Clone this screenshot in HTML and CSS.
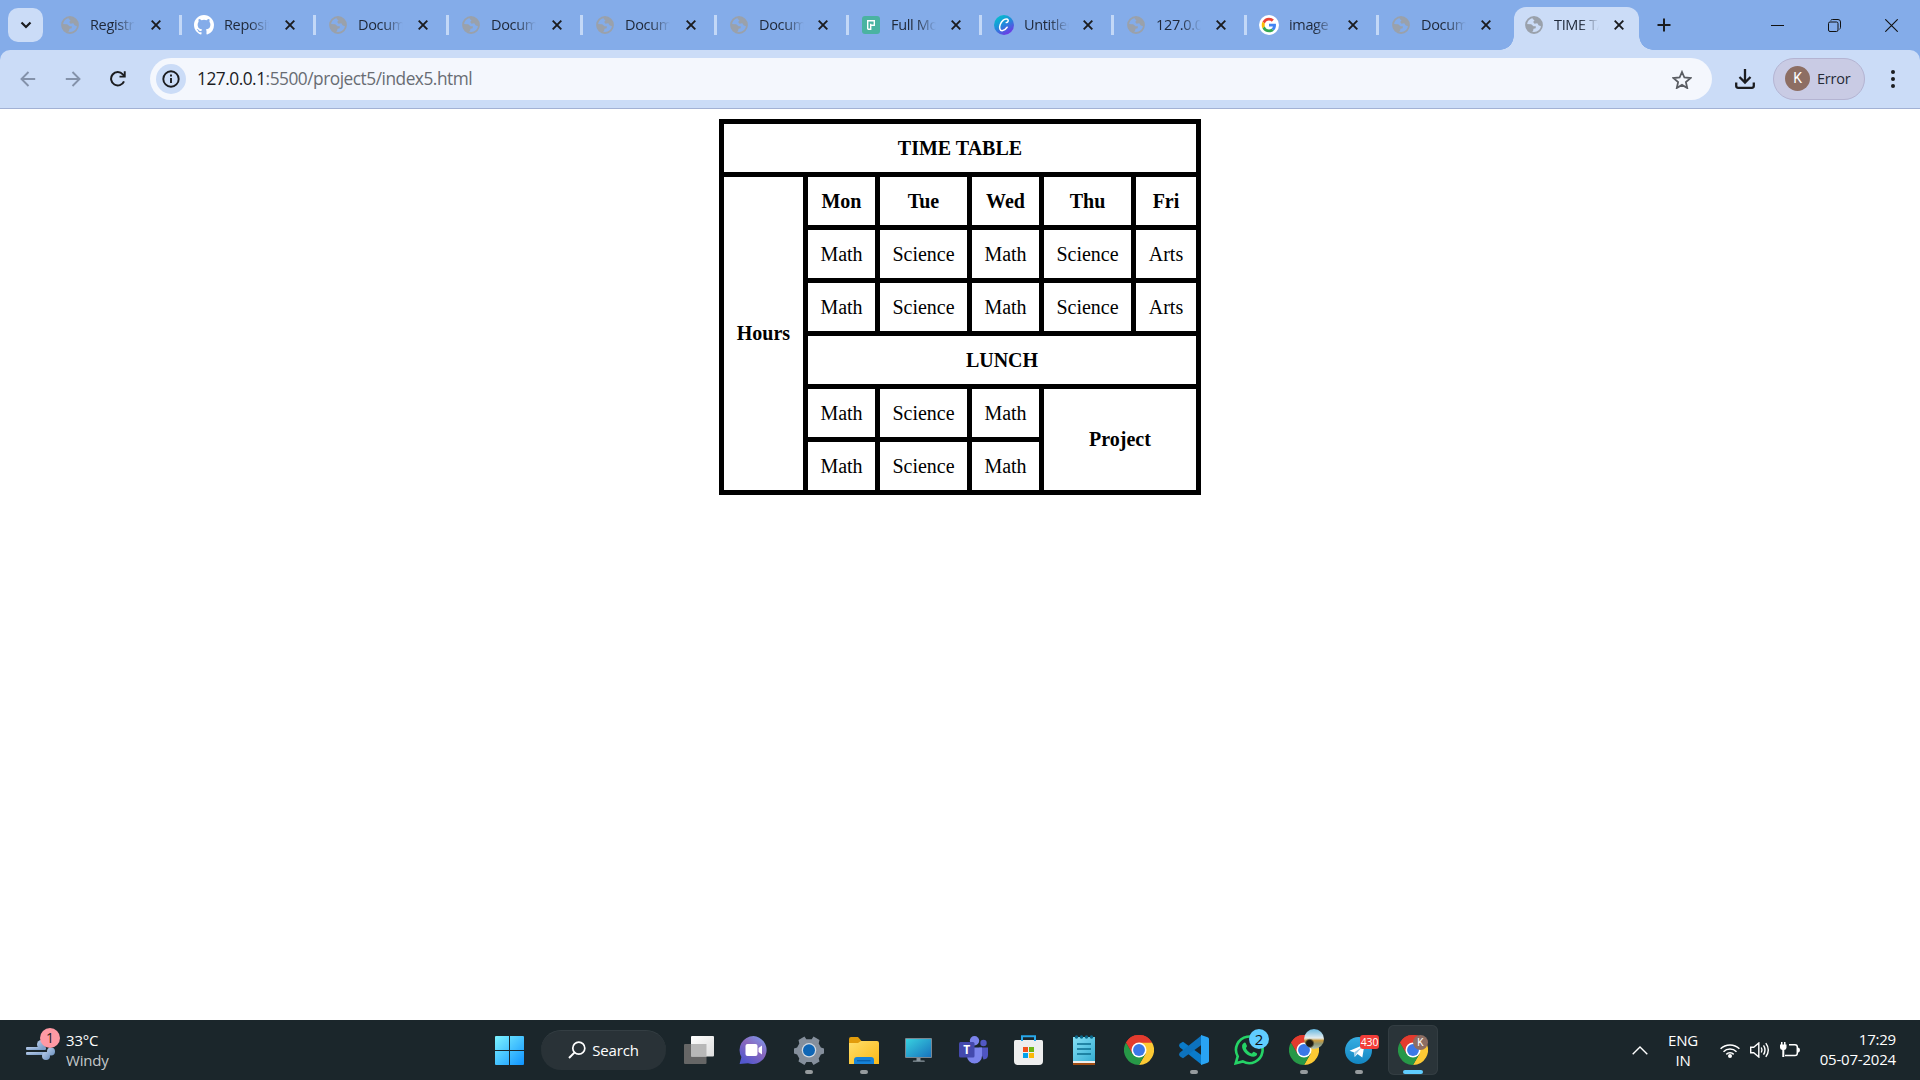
FILE: index.html
```html
<!DOCTYPE html>
<html lang="en">
<head>
<meta charset="utf-8">
<title>TIME TABLE</title>
<link rel="stylesheet" href="styles.css">
</head>
<body>
<svg class="defs" width="0" height="0" aria-hidden="true">
  <defs>
    <symbol id="globe" viewBox="0 0 18 18">
      <circle cx="9" cy="9" r="8" fill="none" stroke="currentColor" stroke-width="1.8"/>
      <path d="M8 1.2L7.600 3 9.500 4.200 8.200 6l1.300 1.800 2.800-.5 1.500 2.200 2.900.7A8 8 0 0 0 8 1.200z" fill="currentColor"/>
      <path d="M1.200 8l5 .3 2.300 1.900h2.300L10.700 12.300 8.500 12.800 8 15.200 6 16.300A8 8 0 0 1 1.200 8z" fill="currentColor"/>
    </symbol>
    <symbol id="close" viewBox="0 0 10 10"><path d="M.7.700l8.600 8.600M9.300.7L.7 9.300" stroke="currentColor" stroke-width="1.900" fill="none"/></symbol>
    <symbol id="chrome" viewBox="0 0 48 48">
      <path d="M24 24L3.200 12A24 24 0 0 1 44.800 12z" fill="#e33b2e"/>
      <path d="M24 12h20.800A24 24 0 0 1 24 48l10.400-18z" fill="#fcc934"/>
      <path d="M34.400 30L24 48A24 24 0 0 1 3.200 12l10.400 18z" fill="#279847"/>
      <path d="M3.200 12A24 24 0 0 1 44.800 12H24L13.600 30z" fill="#e33b2e"/>
      <circle cx="24" cy="24" r="12" fill="#fff"/><circle cx="24" cy="24" r="9.500" fill="#3b78e7"/>
    </symbol>
  </defs>
</svg>

<header class="browser">
  <div class="tabstrip">
    <button class="tab-search"><svg width="12" height="8" viewBox="0 0 12 8"><path d="M1.500 1.500L6 6l4.500-4.500" fill="none" stroke="#1b1c1f" stroke-width="2.200"/></svg></button>
    <div class="tab w134"><span class="fav"><svg class="globe"><use href="#globe"/></svg></span><span class="label">Registration</span><svg class="x"><use href="#close"/></svg></div>
    <div class="tab w134"><span class="fav"><svg width="20" height="20" viewBox="0 0 16 16"><path fill="#fff" d="M8 0C3.580 0 0 3.580 0 8c0 3.540 2.290 6.530 5.470 7.590.4.070.55-.17.55-.38 0-.19-.01-.82-.01-1.490-2.010.37-2.530-.49-2.690-.94-.09-.23-.48-.94-.82-1.130-.28-.15-.68-.52-.01-.53.63-.01 1.080.58 1.230.82.720 1.210 1.870.87 2.330.66.070-.52.28-.87.51-1.070-1.780-.2-3.640-.89-3.640-3.950 0-.87.31-1.590.82-2.150-.08-.2-.36-1.020.08-2.120 0 0 .67-.21 2.200.82a7.600 7.600 0 0 1 4 0c1.530-1.040 2.200-.82 2.200-.82.44 1.100.16 1.920.08 2.120.51.56.82 1.270.82 2.150 0 3.070-1.870 3.750-3.650 3.950.29.25.54.73.54 1.480 0 1.070-.01 1.930-.01 2.200 0 .21.15.46.55.38A8 8 0 0 0 16 8c0-4.420-3.580-8-8-8z"/></svg></span><span class="label">Repositories</span><svg class="x"><use href="#close"/></svg></div>
    <div class="tab w133"><span class="fav"><svg class="globe"><use href="#globe"/></svg></span><span class="label">Document</span><svg class="x"><use href="#close"/></svg></div>
    <div class="tab w134"><span class="fav"><svg class="globe"><use href="#globe"/></svg></span><span class="label">Document</span><svg class="x"><use href="#close"/></svg></div>
    <div class="tab w134"><span class="fav"><svg class="globe"><use href="#globe"/></svg></span><span class="label">Document</span><svg class="x"><use href="#close"/></svg></div>
    <div class="tab w132"><span class="fav"><svg class="globe"><use href="#globe"/></svg></span><span class="label">Document</span><svg class="x"><use href="#close"/></svg></div>
    <div class="tab w133"><span class="fav"><svg width="18" height="18" viewBox="0 0 18 18"><rect width="18" height="18" rx="3" fill="#4ab3a1"/><path d="M5.700 13.300V4.700h6.600v4.600H8.700M5.700 13.300h3V7.800" fill="none" stroke="#fff" stroke-width="1.400"/></svg></span><span class="label">Full Moon</span><svg class="x"><use href="#close"/></svg></div>
    <div class="tab w132"><span class="fav"><svg width="20" height="20" viewBox="0 0 20 20"><defs><linearGradient id="cv" x1=".2" y1="0" x2=".8" y2="1"><stop offset="0" stop-color="#00c4cc"/><stop offset=".45" stop-color="#1f8ddb"/><stop offset="1" stop-color="#7d2ae8"/></linearGradient></defs><circle cx="10" cy="10" r="10" fill="url(#cv)"/><path d="M12.300 7.600c1.500-.2 2.200-1.500 1.800-2.600C13.500 3.500 11 3.700 9 5.400 6.600 7.500 5 11.300 5.900 13.900c.9 2.600 4.300 2.500 7.200-1.700" fill="none" stroke="#fff" stroke-width="1.500" stroke-linecap="round"/></svg></span><span class="label">Untitled</span><svg class="x"><use href="#close"/></svg></div>
    <div class="tab w133"><span class="fav"><svg class="globe"><use href="#globe"/></svg></span><span class="label">127.0.0.1</span><svg class="x"><use href="#close"/></svg></div>
    <div class="tab w132"><span class="fav"><svg width="20" height="20" viewBox="0 0 20 20"><circle cx="10" cy="10" r="10" fill="#fff"/><g transform="translate(2.700 2.700) scale(.304)"><path fill="#EA4335" d="M24 9.500c3.540 0 6.710 1.220 9.210 3.600l6.850-6.850C35.900 2.380 30.470 0 24 0 14.620 0 6.510 5.380 2.560 13.220l7.980 6.190C12.430 13.720 17.740 9.500 24 9.500z"/><path fill="#4285F4" d="M46.980 24.550c0-1.570-.15-3.090-.38-4.550H24v9.020h12.940c-.58 2.960-2.260 5.480-4.780 7.180l7.730 6c4.510-4.180 7.090-10.360 7.090-17.650z"/><path fill="#FBBC05" d="M10.530 28.590c-.48-1.450-.76-2.990-.76-4.590s.27-3.140.76-4.590l-7.980-6.190C.92 16.460 0 20.120 0 24c0 3.880.92 7.540 2.560 10.780l7.970-6.190z"/><path fill="#34A853" d="M24 48c6.480 0 11.930-2.130 15.890-5.810l-7.730-6c-2.150 1.450-4.920 2.300-8.160 2.300-6.260 0-11.570-4.220-13.470-9.910l-7.980 6.190C6.510 42.620 14.620 48 24 48z"/></g></svg></span><span class="label">image</span><svg class="x"><use href="#close"/></svg></div>
    <div class="tab w133 last"><span class="fav"><svg class="globe"><use href="#globe"/></svg></span><span class="label">Document</span><svg class="x"><use href="#close"/></svg></div>
    <div class="tab active"><span class="fav"><svg class="globe"><use href="#globe"/></svg></span><span class="label">TIME TABLE</span><svg class="x"><use href="#close"/></svg></div>
    <svg class="plus" width="14" height="14" viewBox="0 0 14 14"><path d="M7 .5v13M.5 7h13" stroke="#1b1c1f" stroke-width="2"/></svg>
    <div class="window-controls">
      <svg width="13" height="13" viewBox="0 0 13 13"><path d="M0 6.500h13" stroke="#111" stroke-width="1"/></svg>
      <svg width="13" height="13" viewBox="0 0 13 13"><rect x=".5" y="3" width="9.500" height="9.500" rx="1.500" fill="none" stroke="#111"/><path d="M2.800 1.500Q3 .5 4.500.500h5.500a2.500 2.500 0 0 1 2.500 2.500v5.500q0 1.200-1 1.700" fill="none" stroke="#111"/></svg>
      <svg width="13" height="13" viewBox="0 0 13 13"><path d="M.3.300l12.400 12.400M12.700.3L.3 12.700" stroke="#111" stroke-width="1.100"/></svg>
    </div>
  </div>
  <div class="toolbar">
    <nav class="nav">
      <svg class="dim" width="16" height="16" viewBox="0 0 16 16"><path d="M15.200 8H2M8.500 1L1.500 8l7 7" fill="none" stroke="currentColor" stroke-width="1.900"/></svg>
      <svg class="dim" width="16" height="16" viewBox="0 0 16 16"><path d="M.8 8H14M7.500 1l7 7-7 7" fill="none" stroke="currentColor" stroke-width="1.900"/></svg>
      <svg width="16" height="16" viewBox="0 0 16 16"><path d="M14 10.300A6.700 6.700 0 1 1 12.800 3.300L14.300 5" fill="none" stroke="#1b1c1f" stroke-width="2"/><path d="M15.700.3v6.200H9.500V4.800h4.300V.3z" fill="#1b1c1f"/></svg>
    </nav>
    <div class="address">
      <span class="info"><svg width="18" height="18" viewBox="0 0 18 18"><circle cx="9" cy="9" r="7.700" fill="none" stroke="#1b1c1f" stroke-width="1.900"/><path d="M9 8v5M9 4.600v2" stroke="#1b1c1f" stroke-width="1.900"/></svg></span>
      <span class="url"><b>127.0.0.1</b>:5500/project5/index5.html</span>
      <svg class="star" width="20" height="19" viewBox="0 0 20 19"><path d="M10 2l2.400 5.500 6 .6-4.500 4 1.300 5.900L10 14.900 4.800 18l1.300-5.900-4.500-4 6-.6z" fill="none" stroke="#5a5d63" stroke-width="1.800"/></svg>
    </div>
    <svg class="download" width="20" height="20" viewBox="0 0 20 20"><path d="M10 0v13M4.500 8l5.500 5.500L15.500 8M1.200 13.500v3.300q0 2 2 2h13.600q2 0 2-2v-3.300" fill="none" stroke="#1b1c1f" stroke-width="2.300"/></svg>
    <div class="profile"><span class="avatar">K</span><span>Error</span></div>
    <svg class="menu" width="4" height="18" viewBox="0 0 4 18"><g fill="#1b1c1f"><circle cx="2" cy="2" r="2"/><circle cx="2" cy="9" r="2"/><circle cx="2" cy="16" r="2"/></g></svg>
  </div>
</header>

<main class="page">
  <table class="timetable">
    <colgroup><col class="c-hours"><col class="c-math"><col class="c-sci"><col class="c-math"><col class="c-sci"><col class="c-fri"></colgroup>
    <tr><th colspan="6">TIME TABLE</th></tr>
    <tr><th rowspan="6" class="tall">Hours</th><th>Mon</th><th>Tue</th><th>Wed</th><th>Thu</th><th>Fri</th></tr>
    <tr><td>Math</td><td>Science</td><td>Math</td><td>Science</td><td>Arts</td></tr>
    <tr><td>Math</td><td>Science</td><td>Math</td><td>Science</td><td>Arts</td></tr>
    <tr><th colspan="5">LUNCH</th></tr>
    <tr><td>Math</td><td>Science</td><td>Math</td><th colspan="2" rowspan="2" class="tall">Project</th></tr>
    <tr><td>Math</td><td>Science</td><td>Math</td></tr>
  </table>
</main>

<footer class="taskbar">
  <div class="weather">
    <div class="wind">
      <svg width="30" height="20" viewBox="0 0 30 20"><defs><linearGradient id="wd" x1="0" y1="0" x2="1" y2="1"><stop offset="0" stop-color="#b9cdea"/><stop offset="1" stop-color="#6d92c0"/></linearGradient></defs><g fill="url(#wd)"><rect x="0" y="7" width="20" height="3" rx="1"/><rect x="0" y="12" width="24" height="3" rx="1"/><circle cx="15.500" cy="4.500" r="4.500"/><circle cx="25" cy="11.500" r="4"/><circle cx="20" cy="16" r="4"/></g></svg>
      <span class="wind-badge">1</span>
    </div>
    <div class="weather-text"><span>33°C</span><span class="muted">Windy</span></div>
  </div>
  <div class="start"><svg width="29" height="29" viewBox="0 0 29 29"><defs><linearGradient id="wn" x1="0" y1="0" x2="1" y2="1"><stop offset="0" stop-color="#7df3ff"/><stop offset="1" stop-color="#0f93ff"/></linearGradient></defs><path fill="url(#wn)" d="M0 1q0-1 1-1h13v14H0zM15 0h13q1 0 1 1v13H15zM0 15h14v14H1q-1 0-1-1zM15 15h14v13q0 1-1 1H15z"/></svg></div>
  <div class="search"><svg width="18" height="18" viewBox="0 0 18 18"><circle cx="10.800" cy="7.200" r="6" fill="none" stroke="#fff" stroke-width="1.700"/><path d="M6.400 11.600L1 17" stroke="#fff" stroke-width="2"/></svg><span>Search</span></div>
  <div class="apps">
    <div class="app"><svg width="30" height="28" viewBox="0 0 30 28"><defs><linearGradient id="t1" x1="0" y1="0" x2="1" y2="1"><stop offset="0" stop-color="#fff"/><stop offset="1" stop-color="#ddd"/></linearGradient></defs><rect x="0" y="8" width="22.500" height="20" rx="1" fill="#666"/><rect x="7" y="0" width="23" height="20.500" rx="1" fill="url(#t1)"/><path d="M7 8h15.500v12.500H7z" fill="#b8b8b8"/></svg></div>
    <div class="app"><svg width="29" height="28" viewBox="0 0 29 28"><defs><linearGradient id="ch" x1="1" y1="0" x2=".3" y2="1"><stop offset="0" stop-color="#7aa0f4"/><stop offset=".5" stop-color="#8a68bd"/><stop offset="1" stop-color="#5257ce"/></linearGradient></defs><path d="M14.500 0A14 14 0 1 1 9 27.200L.6 28l1.800-7A14 14 0 0 1 14.500 0z" fill="url(#ch)"/><rect x="6.500" y="8" width="12" height="12" rx="2" fill="#fff"/><path d="M19.500 12l3.500-2.500v9L19.500 16z" fill="#fff"/></svg></div>
    <div class="app run"><svg width="30" height="29" viewBox="0 0 30 29"><path d="M10.500.5l1.800 2.700h5.400L19.500.5l6 3.500-.8 3.400 2.200 4 3.100 1v5l-3.100 1-2.200 4 .8 3.200-6 3.300-1.900-2.900h-5.200l-1.900 2.900-6-3.300.8-3.200-2.200-4-3.100-1v-5l3.100-1 2.200-4L4.500 4z" fill="#858f9c"/><circle cx="15" cy="14.300" r="7.200" fill="#d2dae3"/><circle cx="15" cy="14.300" r="6" fill="#0f66b5"/></svg></div>
    <div class="app run"><svg width="30" height="27" viewBox="0 0 30 27"><defs><linearGradient id="fo" x1="0" y1="0" x2="1" y2="1"><stop offset="0" stop-color="#ffdf6b"/><stop offset="1" stop-color="#fbb916"/></linearGradient></defs><path d="M0 2q0-2 2-2h7l3.500 4v4H0z" fill="#e29c0b"/><path d="M0 6h9l3-2h16q2 0 2 2v21H0z" fill="url(#fo)"/><path d="M5 27v-4q0-3 3-3h14q3 0 3 3v4z" fill="#1683d9"/><path d="M8 23.700h13.500" stroke="#0a5fab" stroke-width="1.300"/></svg></div>
    <div class="app"><svg width="27" height="25" viewBox="0 0 27 25"><defs><linearGradient id="mo" x1="0" y1="0" x2="1" y2="1"><stop offset="0" stop-color="#38d1df"/><stop offset="1" stop-color="#1873be"/></linearGradient></defs><rect width="27" height="20" rx="1" fill="#7b8791"/><rect x="1" y="1" width="25" height="18" fill="url(#mo)"/><path d="M11.500 20h4v2.500H19q.8 0 .8 1.300H7.800q0-1.300.8-1.300h2.900z" fill="#8b969e"/></svg></div>
    <div class="app"><svg width="29" height="28" viewBox="0 0 29 28"><circle cx="24.500" cy="7" r="3.200" fill="#5158c4"/><path d="M20 11.500h9v7.500q0 4-4.500 4.500z" fill="#4f55c3"/><circle cx="15.500" cy="4.700" r="4.700" fill="#7b83eb"/><path d="M8 11.500h15v8.500a7.500 7.500 0 0 1-15 0z" fill="#7b83eb"/><rect y="6" width="15.500" height="15.500" rx="1.500" fill="#4449ad"/><text x="7.700" y="18" text-anchor="middle" font-family="Open Sans" font-size="12" font-weight="700" fill="#fff">T</text></svg></div>
    <div class="app"><svg width="29" height="30" viewBox="0 0 29 30"><path d="M1.500 5h26q1.500 0 1.500 1.500V26q0 4-4 4H4q-4 0-4-4V6.500Q0 5 1.500 5z" fill="#eee"/><path d="M8 6V1.200h13V6" fill="none" stroke="#28a8ea" stroke-width="2"/><path d="M9 12h5v5H9z" fill="#f1511b"/><path d="M15 12h5v5h-5z" fill="#6eb514"/><path d="M9 18h5v5H9z" fill="#00a2ed"/><path d="M15 18h5v5h-5z" fill="#fab908"/></svg></div>
    <div class="app"><svg width="22" height="30" viewBox="0 0 22 30"><defs><linearGradient id="np" x1="0" y1="0" x2="1" y2="1"><stop offset="0" stop-color="#86e0f5"/><stop offset="1" stop-color="#35aed3"/></linearGradient></defs><path d="M0 24h22v6H0z" fill="#a24d13"/><path d="M0 24h22v4H0z" fill="#eee"/><path d="M0 2h22v24H0z" fill="url(#np)"/><g fill="#0c6788"><circle cx="3.500" cy="2" r="1.700"/><circle cx="8.500" cy="2" r="1.700"/><circle cx="13.500" cy="2" r="1.700"/><circle cx="18.500" cy="2" r="1.700"/></g><path d="M4 9h14M4 14h14M4 19h14" stroke="#0d6f90" stroke-width="1.700"/></svg></div>
    <div class="app"><svg width="30" height="30"><use href="#chrome"/></svg></div>
    <div class="app run"><svg width="30" height="30" viewBox="0 0 30 30"><path d="M1.500 8.200L4 6.700 23 20.500V30L1 12.500Q-1 10 1.500 8.200z" fill="#0a7bc9"/><path d="M1.500 21.800L4 23.200 23 9.500V0L1 17.500Q-1 20 1.500 21.800z" fill="#0d72bd"/><path d="M22 0l6.700 2.300Q30 2.800 30 4v22q0 1.200-1.300 1.700L22 30z" fill="#29a4f4"/></svg></div>
    <div class="app"><svg width="30" height="30" viewBox="0 0 30 30"><path d="M1.700 28.300l2-7A13.300 13.300 0 1 1 8.800 26.400z" fill="none" stroke="#25d366" stroke-width="2.600"/><path d="M9.500 8.200c1-1.100 2-.8 2.400.2l1.100 2.700c.2.700-1.300 1.700-1 2.300 1.300 2.500 3 4 5.600 5 .7.200 1.500-1.900 2.300-1.600l2.800 1.400c.9.500.1 2.300-.8 2.900-4.400 3-14.800-4-13.800-10.600.1-.9.700-1.600 1.400-2.300z" fill="#25d366"/></svg><span class="badge blue">2</span></div>
    <div class="app run"><svg width="30" height="30"><use href="#chrome"/></svg><span class="badge photo"></span></div>
    <div class="app run"><svg width="27" height="27" viewBox="0 0 27 27"><defs><linearGradient id="tg" x1="0" y1="0" x2="0" y2="1"><stop offset="0" stop-color="#37aee2"/><stop offset="1" stop-color="#1386c2"/></linearGradient></defs><circle cx="13.500" cy="13.500" r="13.500" fill="url(#tg)"/><path d="M4.500 13.800L19.500 7.500 17.300 20.500 12.500 17l-2.800 3-.5-4.500z" fill="#fff"/><path d="M9.300 15.300l7.500-5-5.300 6.200-1.800 3.500z" fill="#9ccbe6"/></svg><span class="badge count">430</span></div>
    <div class="app current"><svg width="30" height="30"><use href="#chrome"/></svg><span class="badge initial">K</span></div>
  </div>
  <div class="tray">
    <svg class="chev" width="16" height="9" viewBox="0 0 16 9"><path d="M.7 8.300L8 1l7.300 7.300" fill="none" stroke="#fff" stroke-width="1.400"/></svg>
    <div class="stack lang"><span>ENG</span><span>IN</span></div>
    <div class="status">
      <svg width="20" height="15" viewBox="0 0 20 15"><g fill="none" stroke="#fff" stroke-width="1.500"><path d="M.6 5.800a13.300 13.300 0 0 1 18.800 0"/><path d="M3.500 8.700a9.200 9.200 0 0 1 13 0"/><path d="M6.300 11.400a5.200 5.200 0 0 1 7.400 0"/></g><circle cx="10" cy="13" r="2" fill="#fff"/></svg>
      <svg width="20" height="16" viewBox="0 0 20 16"><g fill="none" stroke="#fff" stroke-width="1.400"><path d="M.7 5.200h3L8.800 1v14L3.700 10.800h-3z"/><path d="M11.300 5.500q1.400 2.500 0 5"/><path d="M13.500 3.300q3 4.700 0 9.400"/><path d="M15.800 1.200q5 6.800 0 13.600"/></g></svg>
      <svg width="20" height="16" viewBox="0 0 20 16"><path d="M9 2.700h6q2.300 0 2.300 2.300v6.300q0 2.300-2.300 2.300H5" fill="none" stroke="#fff" stroke-width="1.500"/><path d="M18 5.500q2 .3 2 2.600t-2 2.600zM0 2.500h1V0h1.500v2.500h1.500V0h1.500v2.500h1v3q0 2-2.200 2.500V15H2.300V8Q0 7.500 0 5.500z" fill="#fff"/></svg>
    </div>
    <div class="stack clock"><span>17:29</span><span>05-07-2024</span></div>
  </div>
</footer>
</body>
</html>
```
FILE: styles.css
```css
* { box-sizing: border-box; }
body {
  margin: 0;
  width: 1920px;
  height: 1080px;
  overflow: hidden;
  display: flex;
  flex-direction: column;
  background: #fff;
  font-family: "Open Sans", "Noto Sans", sans-serif;
}
svg { display: block; flex: none; }
.defs { position: absolute; }

/* Browser frame */
.browser { flex: none; background: #84ace9; }
.tabstrip { display: flex; align-items: center; height: 50px; padding-left: 8px; }
.tab-search {
  width: 35px; height: 34px; margin-right: 5px; padding: 0; border: 0;
  border-radius: 10px; background: #cbdcf7;
  display: flex; align-items: center; justify-content: center;
}
.tab {
  flex: none;
  display: flex; align-items: center;
  height: 20px; padding-left: 12px;
  border-right: 3px solid #c3d8f7;
  color: #9aa1ab;
}
.tab.last { border-color: transparent; }
.w134 { width: 134px; }
.w133 { width: 133px; }
.w132 { width: 132px; }
.fav { width: 20px; display: flex; justify-content: center; flex: none; }
.globe { width: 18px; height: 18px; }
.label {
  width: 46px; margin-left: 10px; flex: none;
  overflow: hidden; white-space: nowrap;
  font-size: 14.5px; line-height: 20px; letter-spacing: -.35px; color: #1f2838;
  -webkit-mask-image: linear-gradient(90deg, #000 55%, transparent 98%);
  mask-image: linear-gradient(90deg, #000 55%, transparent 98%);
}
.x { width: 10px; height: 10px; margin-left: auto; margin-right: 18px; color: #1b1c1f; }
.tab.active {
  position: relative;
  align-self: flex-end;
  width: 125px; height: 43px; margin-left: 2px; padding: 0 0 7px 10px;
  border: 0; border-radius: 12px 12px 0 0;
  background: #cbdcf7;
}
.active .x { margin-right: 15px; }
.tab.active::before, .tab.active::after {
  content: ""; position: absolute; bottom: 0; width: 14px; height: 14px;
}
.tab.active::before { right: 100%; background: radial-gradient(circle at 0 0, transparent 13.500px, #cbdcf7 14px); }
.tab.active::after { left: 100%; background: radial-gradient(circle at 100% 0, transparent 13.500px, #cbdcf7 14px); }
.plus { margin-left: 18px; }
.window-controls { display: flex; gap: 44px; margin-left: auto; margin-right: 22px; }

.toolbar {
  display: flex; align-items: center;
  height: 59px; padding: 0 25px 0 20px;
  background: #cbdcf7;
  border-bottom: 1px solid #a2b1d4;
  border-radius: 10px 10px 0 0;
}
.nav { display: flex; gap: 29px; width: 130px; }
.dim { color: #8492aa; }
.address {
  display: flex; align-items: center;
  width: 1562px; height: 42px; padding: 0 20px 0 6px;
  border-radius: 21px; background: #f4f7fd;
}
.info {
  width: 30px; height: 30px; border-radius: 50%; background: #cbdcf7;
  display: flex; align-items: center; justify-content: center;
}
.url { margin-left: 11px; font-size: 17.3px; line-height: 24px; letter-spacing: -.48px; color: #686c73; }
.url b { font-weight: 400; color: #1b1c1f; }
.star { margin-left: auto; }
.download { margin-left: 23px; }
.profile {
  display: flex; align-items: center;
  width: 92px; height: 42px; margin-left: 18px; padding: 0 0 1px 11px;
  border: 1px solid #b4b4d2; border-radius: 21px; background: #c9cbe4;
  font-size: 14.5px; line-height: 20px; letter-spacing: -.2px; color: #252a35;
}
.avatar {
  width: 25px; height: 25px; margin-right: 7px; border-radius: 50%;
  background: #8d6e63; color: #fff;
  font: 14px/25px Roboto, sans-serif; text-align: center;
}
.menu { margin-left: auto; }

/* Page content */
.page { flex: 1; padding-top: 10px; }
.timetable {
  width: 482px; margin: 0 auto;
  table-layout: fixed; border-spacing: 5px; background: #000;
  font-family: "Liberation Serif", "Times New Roman", serif;
  font-size: 20px; line-height: 24px; text-align: center;
}
.timetable td, .timetable th { height: 48px; padding: 0; background: #fff; }
.timetable .tall { padding-bottom: 1px; }
.c-hours { width: 79px; }
.c-math { width: 67px; }
.c-sci { width: 87px; }
.c-fri { width: 60px; }

/* Taskbar */
.taskbar {
  flex: none; display: flex; align-items: center;
  height: 60px; background: #1b262b; color: #fff;
  font-size: 15px; line-height: 20px; letter-spacing: -.2px;
}
.weather { display: flex; align-items: center; width: 482px; padding-left: 26px; }
.wind { position: relative; width: 40px; }
.wind-badge {
  position: absolute; left: 14px; top: -12px;
  width: 20px; height: 20px; border-radius: 50%;
  background: #ff99a4; color: #222; font-size: 14px; text-align: center;
}
.weather-text { display: flex; flex-direction: column; }
.muted { color: #c4c8ca; }
.start { width: 59px; padding-left: 13px; }
.search {
  display: flex; align-items: center; justify-content: center; gap: 6px;
  width: 125px; height: 40px; padding-bottom: 1px; border-radius: 20px;
  background: #293237; border-top: 1px solid #343e43;
}
.apps { display: flex; padding-left: 5px; }
.app {
  position: relative; width: 55px; height: 60px;
  display: flex; align-items: center; justify-content: center;
}
.run::after, .current::after {
  content: ""; position: absolute; left: 50%; bottom: 6px;
  width: 8px; height: 4px; margin-left: -4px; border-radius: 2px; background: #969b9e;
}
.current { width: 50px; height: 50px; margin: 5px 2px; border-radius: 6px; background: #2a3439; box-shadow: inset 0 0 0 1px #333d42; }
.current::after { width: 20px; margin-left: -10px; bottom: 1px; background: #60cdff; }
.badge { position: absolute; border-radius: 50%; text-align: center; letter-spacing: 0; }
.blue { left: 28px; top: 9px; width: 20px; height: 20px; background: #60cdff; color: #111; font-size: 15px; }
.photo {
  left: 28px; top: 9px; width: 20px; height: 20px;
  background:
    radial-gradient(ellipse at 28% 72%, #211d13 0 3px, transparent 5px),
    linear-gradient(#66b7df 0, #e4edf0 45%, #c99b3d 58%, #8b9678 75%, #bac6b2);
}
.count { left: 29px; top: 15px; width: 19px; height: 14px; border-radius: 3px; background: #f23d39; color: #fff; font-size: 10.5px; line-height: 14px; letter-spacing: -.2px; }
.initial { left: 25px; top: 10px; width: 15px; height: 15px; background: #8d6e63; font: 10px/15px Roboto, sans-serif; }
.tray { display: flex; align-items: center; margin-left: auto; padding-right: 24px; }
.stack { display: flex; flex-direction: column; }
.lang { width: 40px; margin-left: 15px; align-items: center; }
.status { display: flex; align-items: center; gap: 10px; margin-left: 17px; }
.clock { width: 77px; margin-left: 19px; align-items: flex-end; }
.clock span { margin-top: -1px; margin-bottom: 1px; }
```
